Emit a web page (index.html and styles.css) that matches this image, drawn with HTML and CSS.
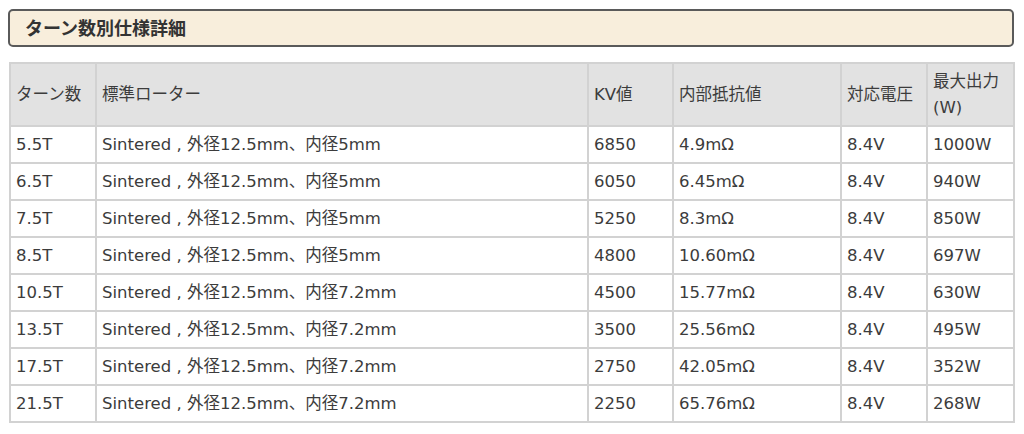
FILE: index.html
```html
<!DOCTYPE html>
<html lang="ja">
<head>
<meta charset="utf-8">
<title>ターン数別仕様詳細</title>
<link rel="stylesheet" href="styles.css">
</head>
<body>
<h2 class="title">ターン数別仕様詳細</h2>
<table class="spec">
  <colgroup>
    <col class="c-turn"><col class="c-rotor"><col class="c-kv"><col class="c-res"><col class="c-volt"><col class="c-out">
  </colgroup>
  <thead>
    <tr><th>ターン数</th><th>標準ローター</th><th>KV値</th><th>内部抵抗値</th><th>対応電圧</th><th>最大出力<br>(W)</th></tr>
  </thead>
  <tbody>
    <tr><td>5.5T</td><td>Sintered , 外径12.5mm、内径5mm</td><td>6850</td><td>4.9mΩ</td><td>8.4V</td><td>1000W</td></tr>
    <tr><td>6.5T</td><td>Sintered , 外径12.5mm、内径5mm</td><td>6050</td><td>6.45mΩ</td><td>8.4V</td><td>940W</td></tr>
    <tr><td>7.5T</td><td>Sintered , 外径12.5mm、内径5mm</td><td>5250</td><td>8.3mΩ</td><td>8.4V</td><td>850W</td></tr>
    <tr><td>8.5T</td><td>Sintered , 外径12.5mm、内径5mm</td><td>4800</td><td>10.60mΩ</td><td>8.4V</td><td>697W</td></tr>
    <tr><td>10.5T</td><td>Sintered , 外径12.5mm、内径7.2mm</td><td>4500</td><td>15.77mΩ</td><td>8.4V</td><td>630W</td></tr>
    <tr><td>13.5T</td><td>Sintered , 外径12.5mm、内径7.2mm</td><td>3500</td><td>25.56mΩ</td><td>8.4V</td><td>495W</td></tr>
    <tr><td>17.5T</td><td>Sintered , 外径12.5mm、内径7.2mm</td><td>2750</td><td>42.05mΩ</td><td>8.4V</td><td>352W</td></tr>
    <tr><td>21.5T</td><td>Sintered , 外径12.5mm、内径7.2mm</td><td>2250</td><td>65.76mΩ</td><td>8.4V</td><td>268W</td></tr>
  </tbody>
</table>
</body>
</html>
```
FILE: styles.css
```css
html, body {
  margin: 0;
  padding: 0;
  background: #ffffff;
}
body {
  padding: 9px 10px 0 8px;
  font-family: "DejaVu Sans", "Noto Sans CJK JP", sans-serif;
  color: #3c3c3c;
}
.title {
  margin: 0;
  height: 34px;
  box-sizing: content-box;
  padding: 0 0 0 15px;
  border: 2px solid #5a5a5a;
  border-radius: 5px;
  background: #f8eedc;
  font-size: 18px;
  font-weight: bold;
  line-height: 35px;
  color: #333333;
}
.spec {
  margin: 15px 0 0 1px;
  border-collapse: collapse;
  width: 1004px;
  table-layout: fixed;
  font-size: 16.5px;
  line-height: 26px;
}
.c-turn { width: 86px; }
.c-rotor { width: 492px; }
.c-kv { width: 85px; }
.c-res { width: 168px; }
.c-volt { width: 86px; }
.c-out { width: 87px; }
.spec th, .spec td {
  border: 2px solid #d2d2d2;
  padding: 5px 5px 4px;
  text-align: left;
  vertical-align: middle;
  font-weight: normal;
  white-space: nowrap;
}
.spec th {
  background: #e2e2e2;
}
.spec td {
  background: #ffffff;
}
```
